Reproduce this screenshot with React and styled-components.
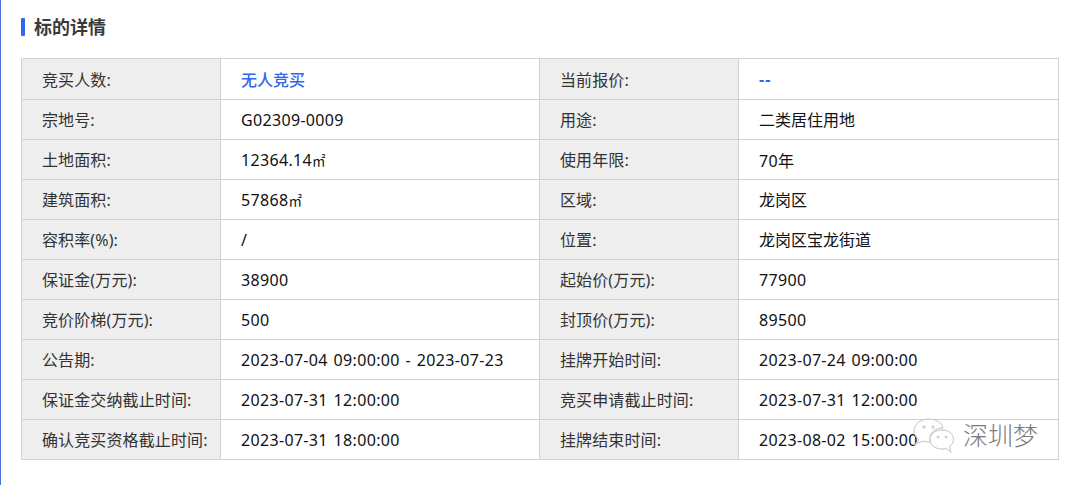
import React from "react";
import styled, { createGlobalStyle } from "styled-components";

const Global = createGlobalStyle`
  html, body { margin: 0; padding: 0; background: #fff; }
  body { font-family: "Noto Sans", "Noto Sans CJK SC", sans-serif; color: #1a1a1a; }
`;

const Page = styled.div`
  position: relative;
  box-sizing: border-box;
  width: 1073px;
  height: 485px;
  border-left: 1.5px solid #4f72dc;
  padding: 16px 0 0 20px;
  overflow: hidden;
`;

const Title = styled.h2`
  display: flex;
  align-items: center;
  gap: 9px;
  margin: 0 0 20px;
  height: 22px;
  font-size: 18px;
  line-height: 22px;
  font-weight: 700;
  color: #3a3a3a;
  &::before {
    content: "";
    width: 4px;
    height: 18px;
    border-radius: 1px;
    background: #3366ee;
  }
`;

const Table = styled.table`
  border-collapse: collapse;
  table-layout: fixed;
  width: 1038px;
  font-size: 16px;
  td { border: 1px solid #d2d2d2; height: 40px; white-space: nowrap; box-sizing: border-box; }
  tr:first-child td { height: 41px; padding-bottom: 0; }
`;

const Label = styled.td`
  background: #eeeeee;
  color: #333;
  padding: 0 0 2px 20px;
  letter-spacing: 0.12px;
`;

const Value = styled.td`
  color: ${(p) => (p.$accent ? "#3366ee" : "#111")};
  font-weight: ${(p) => (p.$accent ? 500 : 400)};
  letter-spacing: ${(p) => (p.$latin ? "0.33px" : "0")};
  word-spacing: 1.3px;
  padding: 0 0 ${(p) => (p.$latin ? "0" : "2px")} 20px;
`;

const Dashes = styled.span`
  display: inline-block;
  font-weight: 700;
  letter-spacing: 1.2px;
`;

const Unit = styled.span`
  font-size: 13.5px;
  letter-spacing: 0;
`;

const Watermark = styled.div`
  position: absolute;
  left: 911px;
  top: 417px;
  display: flex;
  align-items: center;
  gap: 8px;
  color: #7c7c7c;
  font-size: 25px;
  font-weight: 300;
  line-height: 38px;
  text-shadow: 1px 1px 0 #fff, -1px 0 0 rgba(255,255,255,0.7);
`;

const WatermarkText = styled.span`
  margin-top: -3px;
`;

const rows = [
  ["竞买人数:", "无人竞买", "当前报价:", "--", true],
  ["宗地号:", "G02309-0009", "用途:", "二类居住用地"],
  ["土地面积:", "12364.14㎡", "使用年限:", "70年"],
  ["建筑面积:", "57868㎡", "区域:", "龙岗区"],
  ["容积率(%):", "/", "位置:", "龙岗区宝龙街道"],
  ["保证金(万元):", "38900", "起始价(万元):", "77900"],
  ["竞价阶梯(万元):", "500", "封顶价(万元):", "89500"],
  ["公告期:", "2023-07-04 09:00:00 - 2023-07-23", "挂牌开始时间:", "2023-07-24 09:00:00"],
  ["保证金交纳截止时间:", "2023-07-31 12:00:00", "竞买申请截止时间:", "2023-07-31 12:00:00"],
  ["确认竞买资格截止时间:", "2023-07-31 18:00:00", "挂牌结束时间:", "2023-08-02 15:00:00"],
];

const isLatin = (s) => !/[\u4e00-\u9fff]{2}/.test(s);

const renderValue = (s) => {
  if (s === "--") return <Dashes>--</Dashes>;
  if (s.endsWith("㎡")) return <>{s.slice(0, -1)}<Unit>㎡</Unit></>;
  return s;
};

const WeChat = () => (
  <svg width="43" height="38" viewBox="0 0 43 38" fill="rgba(255,255,255,0.8)" stroke="#c2c2c2" strokeWidth="1">
    <path d="M17 2C9 2 2 7 2 14c0 4 3 7 5 9l-5 5 9-4c2 .6 4 1 6 1h2c-1-1.500-1-3-1-4 0-6 6-10 13-10C30 6 24 2 17 2z" />
    <path d="M30 13c-7 0-12 4-12 9.500S23 32 30 32c1.500 0 3-.2 4-.6l5 4-1.500-6c2.500-1.700 4-4 4-6.900C41.500 17 37 13 30 13z" />
    <circle cx="12" cy="10" r="1.200" fill="none" />
    <circle cx="21" cy="10" r="1.200" fill="none" />
    <circle cx="26" cy="20" r="1" fill="none" />
    <circle cx="34" cy="20" r="1" fill="none" />
  </svg>
);

export default function App() {
  return (
    <>
      <Global />
      <Page>
        <Title>标的详情</Title>
        <Table>
          <colgroup>
            <col style={{ width: 199 }} />
            <col style={{ width: 319 }} />
            <col style={{ width: 199 }} />
            <col style={{ width: 320 }} />
          </colgroup>
          <tbody>
            {rows.map((r) => (
              <tr key={r[0]}>
                <Label>{r[0]}</Label>
                <Value $accent={r[4]} $latin={isLatin(r[1])}>{renderValue(r[1])}</Value>
                <Label>{r[2]}</Label>
                <Value $accent={r[4]} $latin={isLatin(r[3])}>{renderValue(r[3])}</Value>
              </tr>
            ))}
          </tbody>
        </Table>
        <Watermark>
          <WeChat />
          <WatermarkText>深圳梦</WatermarkText>
        </Watermark>
      </Page>
    </>
  );
}
